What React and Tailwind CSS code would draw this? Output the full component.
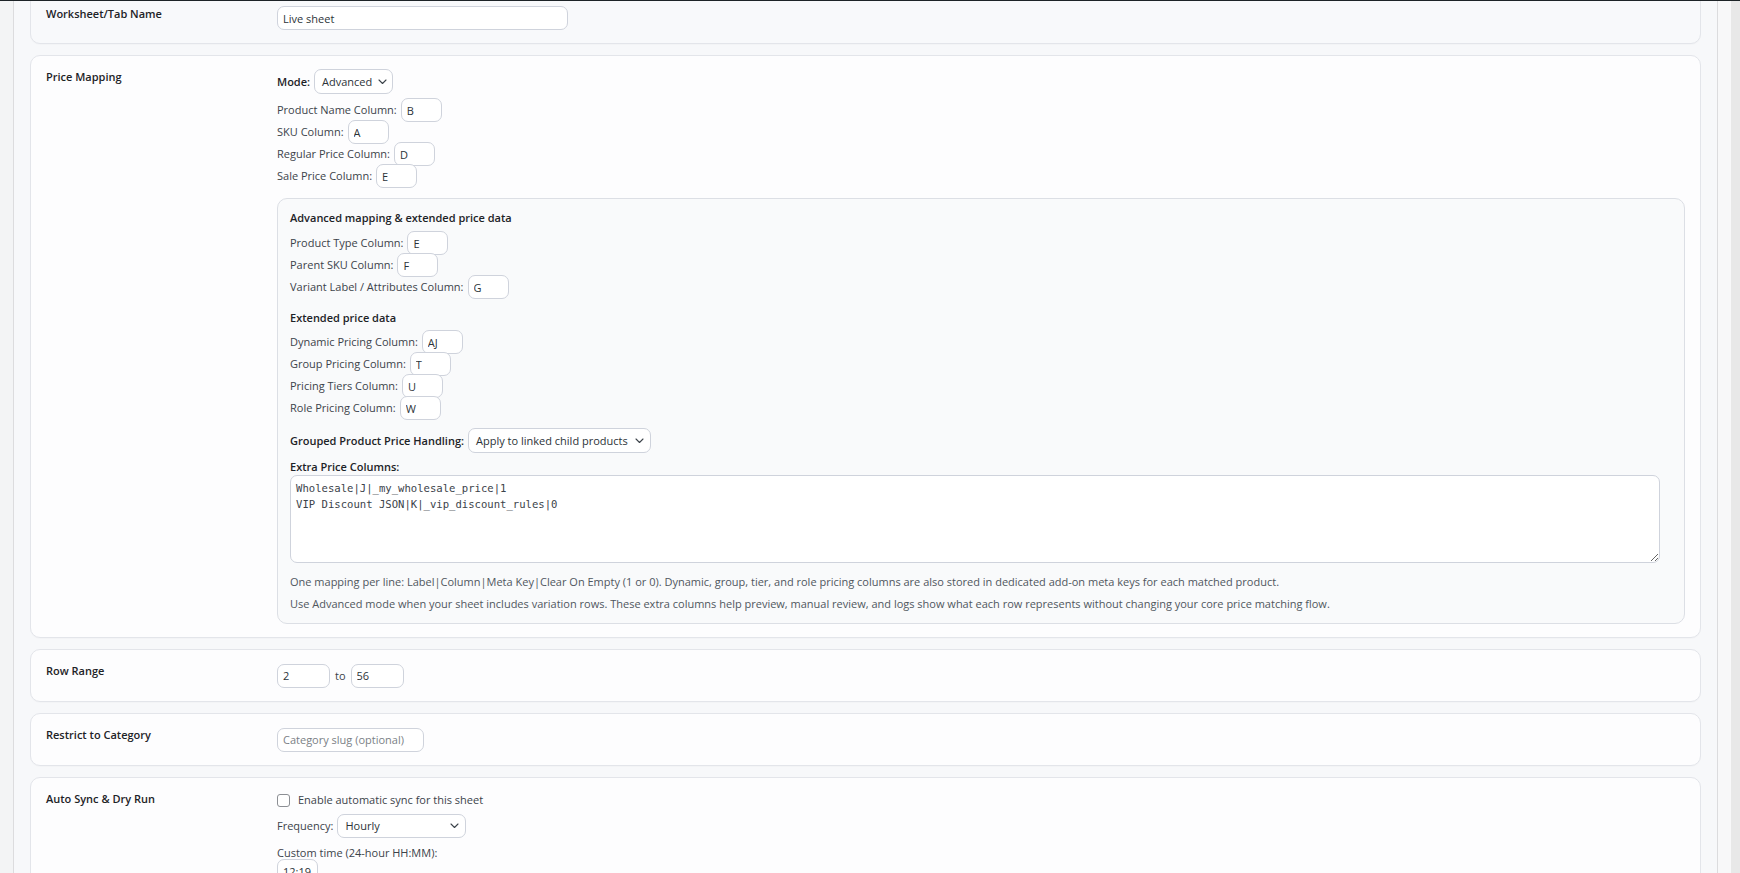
import React from "react";

function Chevron() {
  return (
    <svg width="9" height="6" viewBox="0 0 9 6" className="shrink-0">
      <polyline points="1,1 4.5,4.5 8,1" fill="none" stroke="#3c434a" strokeWidth="1.1" strokeLinecap="round" strokeLinejoin="round" />
    </svg>
  );
}

function Field({ value, w = "w-[41px]", placeholder }) {
  return (
    <input
      readOnly
      defaultValue={value}
      placeholder={placeholder}
      className={`${w} h-6 shrink-0 rounded-[7px] border border-[#cfd3dc] bg-white px-[5px] text-[11px] text-[#2c3338] placeholder:text-[#7b7f86] outline-none`}
    />
  );
}

function Select({ value, w, h = "h-[25px]" }) {
  return (
    <div className={`${w} ${h} shrink-0 rounded-[7px] border border-[#cfd3dc] bg-white pl-[7px] pr-[6px] flex items-center justify-between gap-[6px] text-[#2c3338]`}>
      <span>{value}</span>
      <Chevron />
    </div>
  );
}

function ColRow({ label, value }) {
  return (
    <div className="h-[22px] flex items-center gap-1 text-[#3c434a]">
      <span>{label}</span>
      <Field value={value} />
    </div>
  );
}

function Card({ label, children, bg = "bg-[#fdfdfe]" }) {
  return (
    <section className={`rounded-[10px] border border-[#e3e5ea] ${bg} pl-[15px] pr-[15px] py-[13px] grid grid-cols-[231px_1fr] shadow-[0_1px_1px_rgba(0,0,0,0.02)]`}>
      <div className="font-semibold text-[#1d2327] leading-4">{label}</div>
      <div className="min-w-0">{children}</div>
    </section>
  );
}

export default function App() {
  return (
    <div className="relative h-[873px] overflow-hidden flex bg-[#f0f0f1] font-['Open_Sans',sans-serif] text-[11px] leading-4 text-[#2c3338]">
      <div className="w-[13px] shrink-0 bg-[#f3f4f5]" />
      <div className="w-px shrink-0 bg-[#dcdcde]" />
      <div className="flex-1 min-w-0 bg-[#f7f8fa] px-4">
        <div className="-mt-[8px] flex flex-col gap-[11px]">
          <Card label="Worksheet/Tab Name" bg="bg-[#f8f9fb]">
            <Field value="Live sheet" w="w-[291px]" />
          </Card>

          <Card label="Price Mapping">
            <div className="h-[25px] flex items-center gap-1">
              <span className="font-semibold text-[#1d2327]">Mode:</span>
              <Select value="Advanced" w="w-[79px]" />
            </div>
            <div className="mt-[5px]">
              <ColRow label="Product Name Column:" value="B" />
              <ColRow label="SKU Column:" value="A" />
              <ColRow label="Regular Price Column:" value="D" />
              <ColRow label="Sale Price Column:" value="E" />
            </div>
            <div className="mt-[11px] rounded-[10px] border border-[#dcdfe5] bg-[#f9fafb] pl-3 pr-3 pt-[11px] pb-[11px]">
              <div className="font-semibold text-[#1d2327]">Advanced mapping &amp; extended price data</div>
              <div className="mt-[6px]">
                <ColRow label="Product Type Column:" value="E" />
                <ColRow label="Parent SKU Column:" value="F" />
                <ColRow label="Variant Label / Attributes Column:" value="G" />
              </div>
              <div className="mt-3 font-semibold text-[#1d2327]">Extended price data</div>
              <div className="mt-[5px]">
                <ColRow label="Dynamic Pricing Column:" value="AJ" />
                <ColRow label="Group Pricing Column:" value="T" />
                <ColRow label="Pricing Tiers Column:" value="U" />
                <ColRow label="Role Pricing Column:" value="W" />
              </div>
              <div className="mt-[9px] h-[25px] flex items-center gap-1">
                <span className="font-semibold text-[#1d2327]">Grouped Product Price Handling:</span>
                <Select value="Apply to linked child products" w="w-[183px]" />
              </div>
              <div className="mt-[6px] font-semibold text-[#1d2327]">Extra Price Columns:</div>
              <textarea
                readOnly
                defaultValue={"Wholesale|J|_my_wholesale_price|1\nVIP Discount JSON|K|_vip_discount_rules|0"}
                className="block w-[calc(100%-12px)] h-[88px] rounded-[7px] border border-[#cfd3dc] bg-white px-[5px] py-[4px] font-['DejaVu_Sans_Mono',monospace] text-[10.6px] leading-[16.3px] text-[#3c434a] outline-none"
              />
              <p className="mt-[11px] text-[#50575e]">One mapping per line: Label|Column|Meta Key|Clear On Empty (1 or 0). Dynamic, group, tier, and role pricing columns are also stored in dedicated add-on meta keys for each matched product.</p>
              <p className="mt-[6px] text-[#50575e]">Use Advanced mode when your sheet includes variation rows. These extra columns help preview, manual review, and logs show what each row represents without changing your core price matching flow.</p>
            </div>
          </Card>

          <Card label="Row Range">
            <div className="h-[25px] flex items-center gap-[5px] text-[#3c434a]">
              <Field value="2" w="w-[53px]" />
              <span>to</span>
              <Field value="56" w="w-[53px]" />
            </div>
          </Card>

          <Card label="Restrict to Category">
            <div className="h-[25px] flex items-center">
              <Field placeholder="Category slug (optional)" w="w-[147px]" />
            </div>
          </Card>

          <Card label="Auto Sync & Dry Run">
            <div className="h-[18px] flex items-center gap-2 text-[#3c434a]">
              <span className="w-[13px] h-[13px] rounded-[3px] border border-[#8c8f94] bg-white shrink-0" />
              <span>Enable automatic sync for this sheet</span>
            </div>
            <div className="mt-[5px] h-6 flex items-center gap-1 text-[#3c434a]">
              <span>Frequency:</span>
              <Select value="Hourly" w="w-[129px]" h="h-6" />
            </div>
            <div className="mt-[7px] text-[#3c434a]">Custom time (24-hour HH:MM):</div>
            <div className="-mt-[2px]">
              <Field value="12:19" w="w-[41px]" />
            </div>
            <div className="mt-3 h-4 flex items-center gap-2 text-[#3c434a]">
              <span className="w-[13px] h-[13px] rounded-[3px] border border-[#8c8f94] bg-white shrink-0" />
              <span>Dry run (preview changes without saving)</span>
            </div>
          </Card>
        </div>
      </div>
      <div className="w-px shrink-0 bg-[#dcdcde]" />
      <div className="w-[13px] shrink-0 bg-[#f8f8f9]" />
      <div className="w-[9px] shrink-0 bg-[#e8e8e8]" />
      <div className="absolute top-0 inset-x-0 h-px bg-[#1d2327]" />
    </div>
  );
}
